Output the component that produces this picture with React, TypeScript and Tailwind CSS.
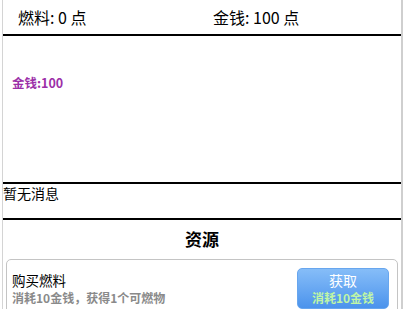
const font = { fontFamily: '"Noto Sans CJK SC", "Noto Sans", sans-serif' };

export default function App() {
  return (
    <div className="h-[309px] w-[405px] overflow-hidden bg-white pl-[2px]" style={font}>
      <div className="flex h-full w-[401px] border-l border-r-2 border-l-[#d4d4d4] border-r-[#cfcfcf] bg-white">
        <div className="flex w-full flex-col">
          {/* stats bar */}
          <div className="flex h-[36px] shrink-0 items-center border-b-2 border-black text-[16px] text-black">
            <div className="w-[199px] pl-[15px]">燃料: 0 点</div>
            <div className="pl-[11px]">金钱: 100 点</div>
          </div>

          {/* scene */}
          <div className="h-[146px] shrink-0 pl-[9px] pt-[33px]">
            <span className="text-[12.5px] font-bold leading-[17px] text-[#9c2fa8]">金钱:100</span>
          </div>

          {/* messages */}
          <div className="h-[38px] shrink-0 border-t-2 border-b-2 border-black text-[14px] leading-[19px] text-black">
            暂无消息
          </div>

          {/* resources */}
          <div className="shrink-0 pt-[7px] text-center text-[17px] font-bold leading-[24px] text-black">资源</div>
          <div className="mx-[3px] mt-[8px] flex h-[60px] shrink-0 items-start justify-between rounded-[5px] border border-[#c4c4c4] pl-[5px] pr-[8px] pt-[8px]">
            <div className="pt-[3px]">
              <div className="text-[13.5px] leading-[18px] text-black">购买燃料</div>
              <div className="text-[12px] font-bold leading-[17px] text-[#8a8a8a]">消耗10金钱，获得1个可燃物</div>
            </div>
            <button className="flex h-[41px] w-[92px] flex-col items-center justify-center rounded-[5px] border border-[#68a6ee] bg-gradient-to-b from-[#86bdf8] to-[#4b93ec]">
              <span className="text-[14px] leading-[18px] text-white">获取</span>
              <span className="text-[12px] font-bold leading-[17px] text-[#bff5a6]">消耗10金钱</span>
            </button>
          </div>
        </div>
      </div>
    </div>
  );
}
